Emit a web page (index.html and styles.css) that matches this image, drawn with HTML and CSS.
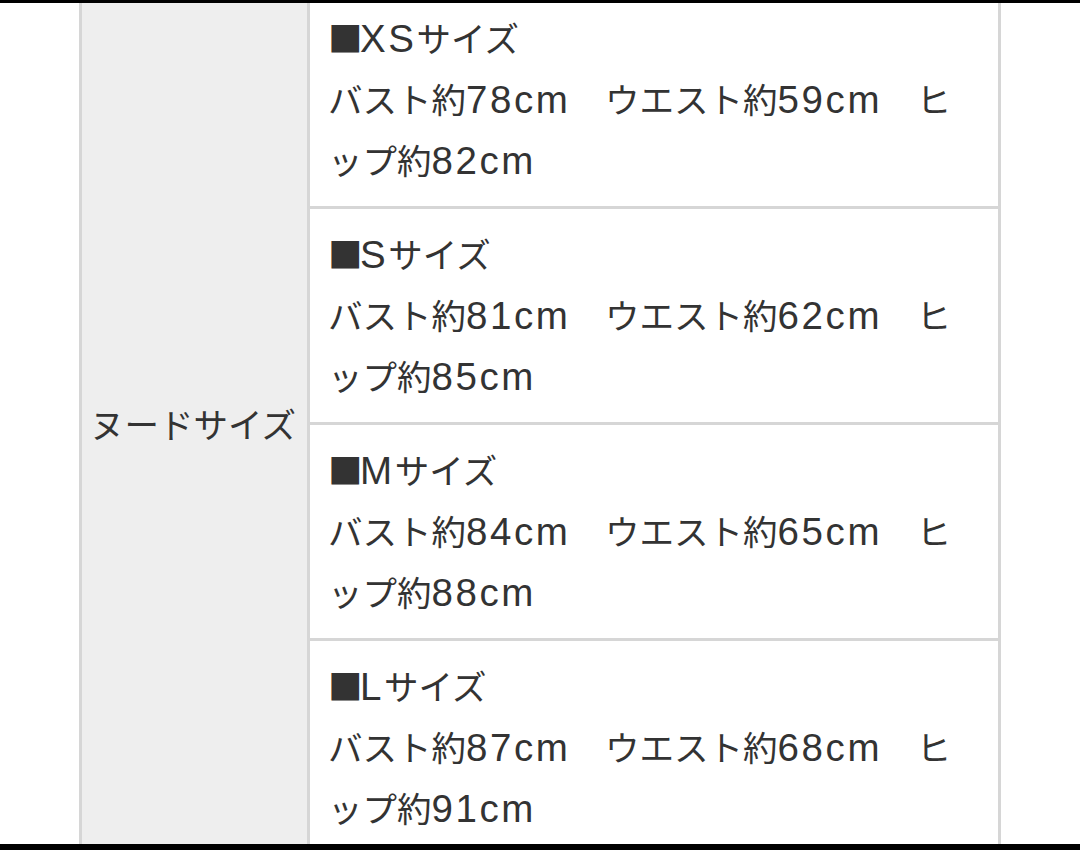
FILE: index.html
```html
<!DOCTYPE html>
<html lang="ja">
<head>
<meta charset="utf-8">
<link rel="stylesheet" href="styles.css">
</head>
<body>
<div class="frame">
  <table class="size-table">
    <tr>
      <th class="label" rowspan="4">ヌードサイズ</th>
      <td class="cell"><span class="sq">■</span><span class="lat">XS</span>サイズ<br>バスト約<span class="lat">78cm</span>　ウエスト約<span class="lat">59cm</span>　ヒップ約<span class="lat">82cm</span></td>
    </tr>
    <tr>
      <td class="cell"><span class="sq">■</span><span class="lat">S</span>サイズ<br>バスト約<span class="lat">81cm</span>　ウエスト約<span class="lat">62cm</span>　ヒップ約<span class="lat">85cm</span></td>
    </tr>
    <tr>
      <td class="cell"><span class="sq">■</span><span class="lat">M</span>サイズ<br>バスト約<span class="lat">84cm</span>　ウエスト約<span class="lat">65cm</span>　ヒップ約<span class="lat">88cm</span></td>
    </tr>
    <tr>
      <td class="cell"><span class="sq">■</span><span class="lat">L</span>サイズ<br>バスト約<span class="lat">87cm</span>　ウエスト約<span class="lat">68cm</span>　ヒップ約<span class="lat">91cm</span></td>
    </tr>
  </table>
  <div class="bar bar-top"></div>
  <div class="bar bar-bottom"></div>
</div>
</body>
</html>
```
FILE: styles.css
```css
html, body {
  margin: 0;
  padding: 0;
  background: #fff;
}
.frame {
  position: relative;
  width: 1080px;
  height: 850px;
  overflow: hidden;
  background: #fff;
}
.size-table {
  border-collapse: collapse;
  margin: -10px 0 0 79px;
  width: 922px;
  font-family: "Noto Sans CJK JP", "Liberation Sans", sans-serif;
  color: #333;
  font-size: 34.5px;
}
.label {
  width: 217px;
  background: #eeeeee;
  border: 3px solid #d6d6d6;
  font-weight: normal;
  text-align: left;
  vertical-align: middle;
  padding: 0 0 0 8px;
  white-space: nowrap;
  line-height: 61px;
}
.cell {
  border: 3px solid #d6d6d6;
  background: #fff;
  padding: 14px 20px 16px 18px;
  line-height: 61px;
  text-align: left;
  vertical-align: top;
}
.lat {
  font-family: "Liberation Sans", sans-serif;
  font-size: 38.5px;
  letter-spacing: 2.6px;
  line-height: 1;
}
.sq {
  font-family: "Noto Sans CJK JP", sans-serif;
  display: inline-block;
  width: 32px;
  line-height: 1;
}
.bar {
  position: absolute;
  left: 0;
  width: 100%;
  background: #000;
}
.bar-top {
  top: 0;
  height: 3px;
}
.bar-bottom {
  top: 844px;
  height: 6px;
}
```
